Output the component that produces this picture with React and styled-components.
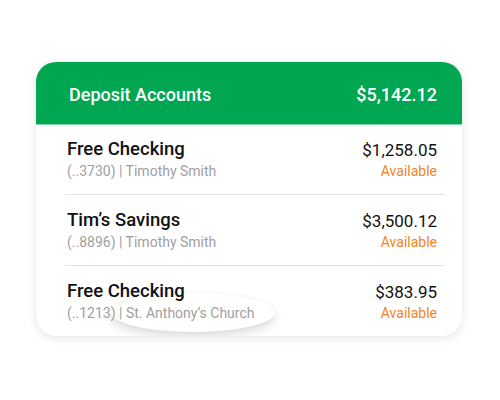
import React from "react";
import styled, { createGlobalStyle } from "styled-components";

const Global = createGlobalStyle`
  html, body {
    margin: 0;
    padding: 0;
    background: #ffffff;
    font-family: Roboto, "Liberation Sans", sans-serif;
  }
`;

const accounts = [
  { name: "Free Checking", sub: "(..3730) | Timothy Smith", amount: "$1,258.05" },
  { name: "Tim\u2019s Savings", sub: "(..8896) | Timothy Smith", amount: "$3,500.12" },
  { name: "Free Checking", sub: "(..1213) | St. Anthony\u2019s Church", amount: "$383.95", spot: true },
];

const App = () => {
  return (
    <>
      <Global />
      <Page>
        <Card>
          <Header>
            <HeaderTitle>Deposit Accounts</HeaderTitle>
            <HeaderTotal>$5,142.12</HeaderTotal>
          </Header>
          <List>
            {accounts.map((a, i) => (
              <Row key={i} $last={i === accounts.length - 1}>
                {a.spot && <Spot />}
                <Info>
                  <Name>{a.name}</Name>
                  <Sub>{a.sub}</Sub>
                </Info>
                <Balance>
                  <Amount>{a.amount}</Amount>
                  <Avail>Available</Avail>
                </Balance>
              </Row>
            ))}
          </List>
        </Card>
      </Page>
    </>
  );
};

const Page = styled.div`
  width: 500px;
  height: 400px;
  padding: 62px 0 0 36px;
  box-sizing: border-box;
`;

const Card = styled.div`
  width: 426px;
  height: 274px;
  border-radius: 20px;
  background: #fff;
  box-shadow: 0 2px 10px rgba(0, 0, 0, 0.1), 0 0 2px rgba(0, 0, 0, 0.06);
  overflow: hidden;
`;

const Header = styled.div`
  height: 62px;
  background: #00a651;
  display: flex;
  align-items: center;
  justify-content: space-between;
  padding: 0 25px 0 33px;
  color: #fff;
  font-weight: 500;
  font-size: 18px;
  border-bottom: 1px solid #7fd3a8;
`;

const HeaderTitle = styled.div`
  padding-top: 2px;
`;

const HeaderTotal = styled.div`
  padding-top: 2px;
`;

const List = styled.div`
  margin: 0 17px 0 29px;
`;

const Row = styled.div`
  position: relative;
  height: 71px;
  box-sizing: border-box;
  display: flex;
  justify-content: space-between;
  align-items: flex-start;
  padding: 14px 8px 0 2px;
  border-bottom: ${(p) => (p.$last ? "none" : "1px solid #e3e3e3")};

  &:first-child {
    height: 70px;
    padding-top: 13px;
  }
`;

const Spot = styled.div`
  position: absolute;
  left: 46px;
  top: 27px;
  width: 164px;
  height: 39px;
  border-radius: 50%;
  background: #fff;
  box-shadow: 0 5px 10px rgba(0, 0, 0, 0.13), 0 0 4px rgba(0, 0, 0, 0.04);
`;

const Info = styled.div`
  position: relative;
  display: flex;
  flex-direction: column;
  gap: 2px;
`;

const Name = styled.div`
  font-size: 18.5px;
  font-weight: 500;
  color: #111;
  line-height: 22px;
`;

const Sub = styled.div`
  font-size: 14px;
  color: #a0a0a0;
  line-height: 18px;
`;

const Balance = styled.div`
  position: relative;
  display: flex;
  flex-direction: column;
  align-items: flex-end;
  gap: 1px;
`;

const Amount = styled.div`
  font-size: 17px;
  color: #111;
  line-height: 22px;
  padding-top: 1px;
`;

const Avail = styled.div`
  font-size: 14px;
  color: #f2841f;
  line-height: 18px;
`;

export default App;
